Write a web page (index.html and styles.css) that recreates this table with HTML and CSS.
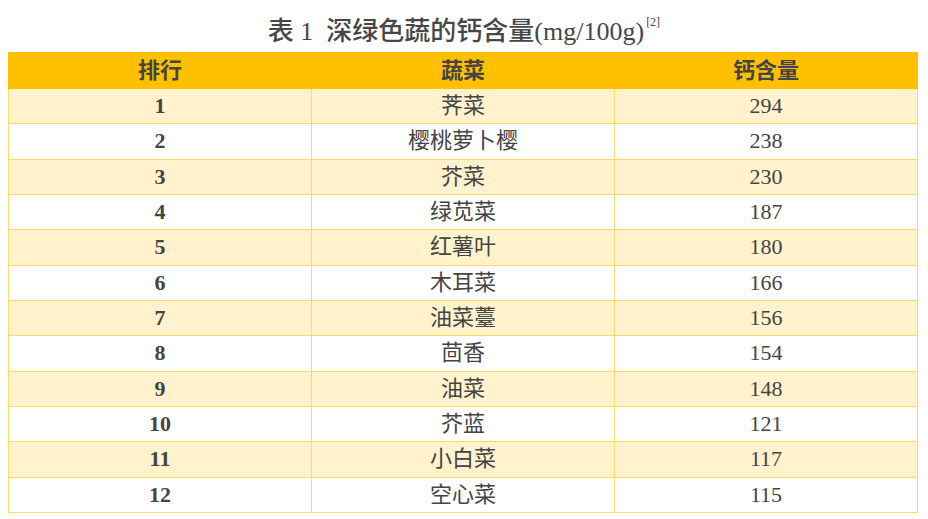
FILE: index.html
```html
<!DOCTYPE html>
<html lang="zh">
<head>
<meta charset="utf-8">
<link rel="stylesheet" href="styles.css">
</head>
<body>
<div class="title">表 1&nbsp; 深绿色蔬的钙含量(mg/100g)<sup class="ref">[2]</sup></div>
<table class="tbl">
<thead>
<tr><th>排行</th><th>蔬菜</th><th>钙含量</th></tr>
</thead>
<tbody>
<tr><td class="rank">1</td><td>荠菜</td><td>294</td></tr>
<tr><td class="rank">2</td><td>樱桃萝卜樱</td><td>238</td></tr>
<tr><td class="rank">3</td><td>芥菜</td><td>230</td></tr>
<tr><td class="rank">4</td><td>绿苋菜</td><td>187</td></tr>
<tr><td class="rank">5</td><td>红薯叶</td><td>180</td></tr>
<tr><td class="rank">6</td><td>木耳菜</td><td>166</td></tr>
<tr><td class="rank">7</td><td>油菜薹</td><td>156</td></tr>
<tr><td class="rank">8</td><td>茴香</td><td>154</td></tr>
<tr><td class="rank">9</td><td>油菜</td><td>148</td></tr>
<tr><td class="rank">10</td><td>芥蓝</td><td>121</td></tr>
<tr><td class="rank">11</td><td>小白菜</td><td>117</td></tr>
<tr><td class="rank">12</td><td>空心菜</td><td>115</td></tr>
</tbody>
</table>
</body>
</html>
```
FILE: styles.css
```css
html, body {
  margin: 0;
  padding: 0;
  background: #ffffff;
}
body {
  padding: 0 8px;
  font-family: "Liberation Serif", "Noto Sans CJK SC", serif;
  color: #444444;
}
.title {
  height: 52px;
  box-sizing: border-box;
  padding-top: 14px;
  text-align: center;
  font-size: 26px;
  line-height: 36px;
  font-weight: 500;
  color: #474747;
}
.ref {
  font-size: 12px;
  font-weight: 400;
  vertical-align: top;
  line-height: 12px;
  position: relative;
  top: 2px;
  margin-left: 2px;
}
.tbl {
  width: 910px;
  border-collapse: collapse;
  table-layout: fixed;
}
.tbl th, .tbl td {
  height: 34.33px;
  padding: 0;
  text-align: center;
  vertical-align: middle;
  font-size: 22px;
  line-height: 24px;
}
.tbl th {
  background: #ffc000;
  border: 1px solid #ffc000;
  font-weight: 700;
  color: #444444;
  height: 35px;
}
.tbl td {
  border: 1px solid #ffd966;
  font-weight: 400;
}
.tbl tbody tr:nth-child(odd) td {
  background: #fff2cc;
}
.tbl td.rank {
  font-weight: 700;
}
```
